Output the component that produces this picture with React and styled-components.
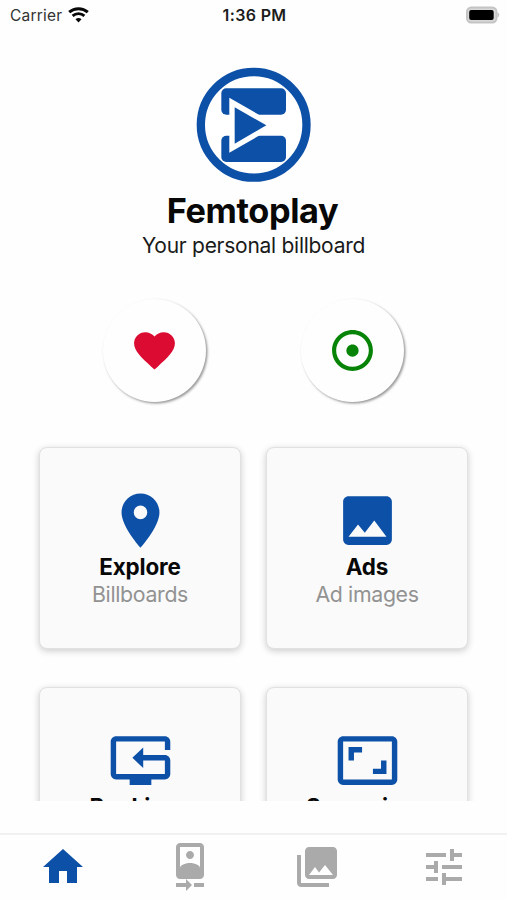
import React from "react";
import styled, { createGlobalStyle } from "styled-components";
import {
  MdPlace, MdPhoto, MdAspectRatio, MdHome, MdCameraFront,
  MdPhotoLibrary, MdTune, MdFavorite, MdAdjust,
} from "react-icons/md";

const blue = "#0d50a7";

const GlobalStyle = createGlobalStyle`
  * { box-sizing: border-box; }
  body { margin: 0; background: #fff; font-family: Inter, Roboto, sans-serif; }
  svg { display: block; flex: none; }
`;

const Screen = styled.div`
  width: 507px;
  height: 900px;
  display: flex;
  flex-direction: column;
  background: #fefefe;
  overflow: hidden;
`;

const StatusBar = styled.header`
  height: 30px;
  flex: none;
  display: grid;
  grid-template-columns: 1fr auto 1fr;
  align-items: center;
  padding: 0 7px 0 10px;
`;

const Carrier = styled.div`
  display: flex;
  align-items: center;
  gap: 6px;
  font-size: 15.5px;
  color: #333;
  letter-spacing: 0.2px;
`;

const Clock = styled.div`
  font-size: 16px;
  font-weight: 600;
  color: #1c1c1c;
  letter-spacing: 0.35px;
  margin-right: 1px;
`;

const BatterySlot = styled.div`
  display: flex;
  justify-content: flex-end;
`;

const Content = styled.main`
  height: 771px;
  flex: none;
  overflow: hidden;
  display: flex;
  flex-direction: column;
  align-items: center;
  padding-top: 37px;
`;

const Title = styled.h1`
  margin: 9px 2px 0 0;
  font-size: 34.3px;
  line-height: 40px;
  font-weight: 700;
  letter-spacing: -0.4px;
  color: #080808;
`;

const Tagline = styled.p`
  margin: 2px 0 0;
  font-size: 21px;
  line-height: 26px;
  color: #1a1a1a;
  letter-spacing: -0.27px;
`;

const QuickActions = styled.div`
  display: flex;
  gap: 95px;
  margin-top: 40px;
`;

const RoundButton = styled.button`
  width: 103px;
  height: 103px;
  border: 0;
  padding: 0 1px 1px 0;
  border-radius: 50%;
  display: flex;
  align-items: center;
  justify-content: center;
  background: #fefefe;
  color: ${(p) => p.$color};
  box-shadow: 1.5px 1.5px 2.5px rgba(0, 0, 0, 0.4);
`;

const CardGrid = styled.div`
  display: grid;
  grid-template-columns: 202px 202px;
  grid-auto-rows: 202px;
  gap: 38px 25px;
  margin-top: 45px;
`;

const Card = styled.section`
  display: flex;
  flex-direction: column;
  align-items: center;
  padding-top: 40px;
  border: 1.5px solid #e1e1e1;
  border-radius: 8px;
  background: #fafafa;
  box-shadow: 0 2px 7px rgba(0, 0, 0, 0.2);
  color: ${blue};
`;

const CardTitle = styled.h2`
  margin: 0;
  font-size: 22.4px;
  line-height: 27px;
  font-weight: 700;
  letter-spacing: -0.15px;
  color: #080808;
`;

const CardCaption = styled.p`
  margin: 0;
  font-size: 21.3px;
  line-height: 28px;
  letter-spacing: -0.33px;
  color: #929292;
`;

const TabBar = styled.nav`
  height: 67px;
  flex: none;
  margin-top: auto;
  display: grid;
  grid-template-columns: repeat(4, 1fr);
  border-top: 2px solid #f1f1f1;
`;

const Tab = styled.button`
  border: 0;
  padding: 0 0 1px;
  background: none;
  display: flex;
  align-items: center;
  justify-content: center;
  color: ${(p) => (p.$active ? blue : "#aaa")};
`;

function WifiIcon() {
  return (
    <svg width="21" height="16" viewBox="0 0 21 16" fill="none" stroke="#080808">
      <path d="M1.2 5.2C6.5.6 14.5.6 19.8 5.2" strokeWidth="3" />
      <path d="M4.6 8.9c3.4-3 8.4-3 11.8 0" strokeWidth="2.8" />
      <path d="M10.5 15.4l-3-3.2c1.7-1.6 4.3-1.6 6 0z" fill="#080808" stroke="none" />
    </svg>
  );
}

function BatteryIcon() {
  return (
    <svg width="34" height="18" viewBox="0 0 34 18">
      <rect x="1" y="1.6" width="29.5" height="14.8" rx="4.2" fill="#d8d8d8" stroke="#c4c4c4" strokeWidth="2" />
      <rect x="3.2" y="3.9" width="24.5" height="10.2" rx="2" fill="#000" />
      <path d="M31.5 6.6q1.8.4 1.8 2.4t-1.8 2.4z" fill="#c4c4c4" />
    </svg>
  );
}

function Logo() {
  return (
    <svg width="115" height="115" viewBox="19 20 345 345">
      <circle cx="192" cy="193.5" r="158.5" fill="#fff" stroke={blue} strokeWidth="25" />
      <rect x="95" y="84" width="194" height="79" rx="15" fill={blue} />
      <rect x="95" y="226" width="194" height="79" rx="15" fill={blue} />
      <path d="M119 112L263 195L119 277Z" fill="#fff" />
      <path d="M135 141L230 195L135 250Z" fill={blue} />
    </svg>
  );
}

function BookingIcon() {
  return (
    <svg width="65" height="65" viewBox="0 0 24 24" fill="currentColor">
      <path d="M3 3C1.9 3 1 3.9 1 5v12c0 1.1.9 2 2 2h5v2h8v-2h5c1.1 0 2-.9 2-2v-5c0-1.1-.9-2-2-2h-8V7.2L9 11l4 3.8V12h8v5H3V5h18v3.1h2V5c0-1.1-.9-2-2-2z" />
    </svg>
  );
}

const cards = [
  { title: "Explore", caption: "Billboards", icon: MdPlace },
  { title: "Ads", caption: "Ad images", icon: MdPhoto },
  { title: "Bookings", icon: BookingIcon },
  { title: "Screenings", icon: MdAspectRatio },
];

const tabs = [MdHome, MdCameraFront, MdPhotoLibrary, MdTune];

export default function App() {
  return (
    <Screen>
      <GlobalStyle />
      <StatusBar>
        <Carrier>Carrier <WifiIcon /></Carrier>
        <Clock>1:36 PM</Clock>
        <BatterySlot><BatteryIcon /></BatterySlot>
      </StatusBar>
      <Content>
        <Logo />
        <Title>Femtoplay</Title>
        <Tagline>Your personal billboard</Tagline>
        <QuickActions>
          <RoundButton $color="#dc0b31"><MdFavorite size={49} /></RoundButton>
          <RoundButton $color="#078407"><MdAdjust size={49} /></RoundButton>
        </QuickActions>
        <CardGrid>
          {cards.map(({ title, caption, icon: Icon }) => (
            <Card key={title}>
              <Icon size={65} />
              <CardTitle>{title}</CardTitle>
              {caption && <CardCaption>{caption}</CardCaption>}
            </Card>
          ))}
        </CardGrid>
      </Content>
      <TabBar>
        {tabs.map((Icon, i) => (
          <Tab key={i} $active={i === 0}><Icon size={48} /></Tab>
        ))}
      </TabBar>
    </Screen>
  );
}
